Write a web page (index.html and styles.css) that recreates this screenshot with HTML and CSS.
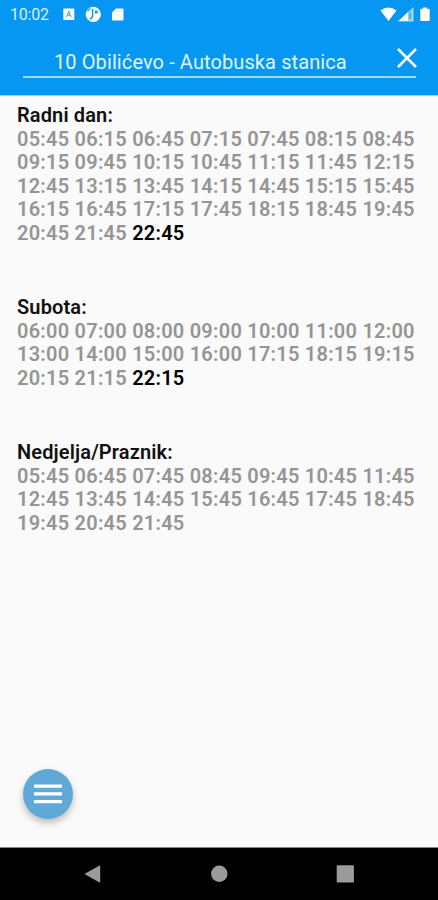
FILE: index.html
```
<!DOCTYPE html>
<html lang="sr-Latn">
<head>
  <meta charset="UTF-8" />
  <meta name="viewport" content="width=device-width, initial-scale=1.0" />
  <title>Red vožnje</title>
  <link rel="stylesheet" href="styles.css">
</head>
<body>
  <header class="top">
    <div class="status">
      <span class="clock">10:02</span>
      <svg class="status-left" width="62" height="18" viewBox="0 0 62 18">
        <rect x="1.3" y="2.5" width="11" height="11.5" rx="1" fill="#fff"/>
        <path d="M4.5 11l2.300-5.500L9.100 11M5.300 9.300h3" fill="none" stroke="#4aaeea" stroke-width="1.1"/>
        <circle cx="31.3" cy="8.3" r="7.6" fill="#fff"/>
        <path d="M30.600 3v6.400c0 2-1 3.200-2.800 3.600" fill="none" stroke="#0697f2" stroke-width="1.5"/>
        <path d="M25.500 5l3-2.500" stroke="#0697f2" stroke-width="1.2"/>
        <rect x="33" y="4.5" width="2.6" height="3" fill="#0697f2"/>
        <path d="M54 2.500h6.400q1.100 0 1.100 1.100v9.800q0 1.100-1.100 1.100h-9.300q-1.100 0-1.100-1.100V6.500z" fill="#fff"/>
        <path d="M54.400 4v1.800M56.600 4v1.800M58.800 4v1.800" stroke="#b5dffb" stroke-width=".8"/>
      </svg>
      <svg class="status-right" width="52" height="18" viewBox="0 0 52 18">
        <path d="M.5 4.500Q8.500-1.300 16.500 4.500l-8 10.500z" fill="#fff"/>
        <path d="M18.500 15L33 1.500V15z" fill="#8dcdf8"/>
        <path d="M18.500 15L28 6.100V15z" fill="#fff"/>
        <path d="M18.500 15H33V1.500" fill="none" stroke="#d3ecfc" stroke-width=".8"/>
        <path d="M30.200 6.500V13" stroke="#2fa7f4" stroke-width="1.3"/>
        <path d="M43 1.500h4v1.200h1.500q1.200 0 1.200 1.200v10q0 1.200-1.200 1.200h-7q-1.200 0-1.200-1.200v-10q0-1.200 1.200-1.200H43z" fill="#fff"/>
      </svg>
    </div>
    <div class="search">
      <span class="line-name">10 Obilićevo - Autobuska stanica</span>
      <svg class="close" width="20" height="20" viewBox="0 0 20 20">
        <path d="M1 1l18 18M19 1L1 19" stroke="#fff" stroke-width="2.5"/>
      </svg>
    </div>
  </header>

  <main class="timetable">
    <section class="day">
      <h2>Radni dan:</h2>
      <p>05:45 06:15 06:45 07:15 07:45 08:15 08:45
        09:15 09:45 10:15 10:45 11:15 11:45 12:15
        12:45 13:15 13:45 14:15 14:45 15:15 15:45
        16:15 16:45 17:15 17:45 18:15 18:45 19:45
        20:45 21:45 <span class="next">22:45</span></p>
    </section>
    <section class="day">
      <h2>Subota:</h2>
      <p>06:00 07:00 08:00 09:00 10:00 11:00 12:00
        13:00 14:00 15:00 16:00 17:15 18:15 19:15
        20:15 21:15 <span class="next">22:15</span></p>
    </section>
    <section class="day">
      <h2>Nedjelja/Praznik:</h2>
      <p>05:45 06:45 07:45 08:45 09:45 10:45 11:45
        12:45 13:45 14:45 15:45 16:45 17:45 18:45
        19:45 20:45 21:45</p>
    </section>
  </main>

  <button class="menu" aria-label="Meni">
    <svg width="28" height="20" viewBox="0 0 28 20">
      <path d="M0 2.200h28M0 9.800h28M0 17.600h28" stroke="#fff" stroke-width="3.3"/>
    </svg>
  </button>

  <nav class="navbar">
    <svg width="438" height="52" viewBox="0 0 438 52">
      <path d="M84.500 26L99 17.800q1.200-.6 1.200.7v15q0 1.300-1.200.7z" fill="#9b9b9b"/>
      <circle cx="219.3" cy="25.8" r="8.2" fill="#9b9b9b"/>
      <rect x="336.7" y="17.3" width="17.2" height="17.3" rx="1" fill="#9b9b9b"/>
    </svg>
  </nav>
</body>
</html>
```
FILE: styles.css
```
body {
  margin: 0;
  height: 900px;
  display: flex;
  flex-direction: column;
  font-family: Roboto, sans-serif;
  background-color: #fafafa;
  color: #111;
  overflow: hidden;
}
.top {
  height: 95px;
  flex: none;
  background: #0697f2;
  color: #fff;
  border-bottom: 1px solid #8ad6ff;
}
.status {
  display: flex;
  height: 29px;
  padding: 0 6px 0 10px;
  align-items: center;
}
.clock {
  width: 52px;
  font-size: 16px;
  letter-spacing: -0.2px;
  color: #d9effd;
}
.status-right {
  margin-left: auto;
}
.search {
  display: flex;
  justify-content: space-between;
  height: 47px;
  margin: 0 22px 0 23px;
  border-bottom: 2px solid #a5d8fa;
}
.line-name {
  padding: 21px 0 0 31px;
  font-size: 20px;
  line-height: 24px;
  letter-spacing: 0.1px;
  color: #e2f3fe;
  white-space: nowrap;
}
.close {
  margin: 19px -1px 0 0;
}

.timetable {
  flex: 1;
  padding: 8.4px 14px 0 17px;
}
.day {
  margin-bottom: 51px;
  font-size: 20px;
  line-height: 23.5px;
}
.day h2 {
  margin: 0;
  font-size: 20px;
  font-weight: 600;
  letter-spacing: 0.13px;
}
.day p {
  margin: 0;
  font-weight: 600;
  letter-spacing: 0.24px;
  color: #959595;
}
.day .next {
  color: #000;
}

.menu {
  display: flex;
  align-items: center;
  justify-content: center;
  flex: none;
  width: 50px;
  height: 50px;
  margin: 0 0 28px 23px;
  padding: 0;
  border: none;
  border-radius: 50%;
  background: #5fa9d8;
  box-shadow: 0 4px 7px rgba(0,0,0,0.25);
}

.navbar {
  height: 53px;
  flex: none;
  background: #000;
  border-top: 1px solid #888;
  box-sizing: border-box;
}
.navbar svg {
  display: block;
}
```
